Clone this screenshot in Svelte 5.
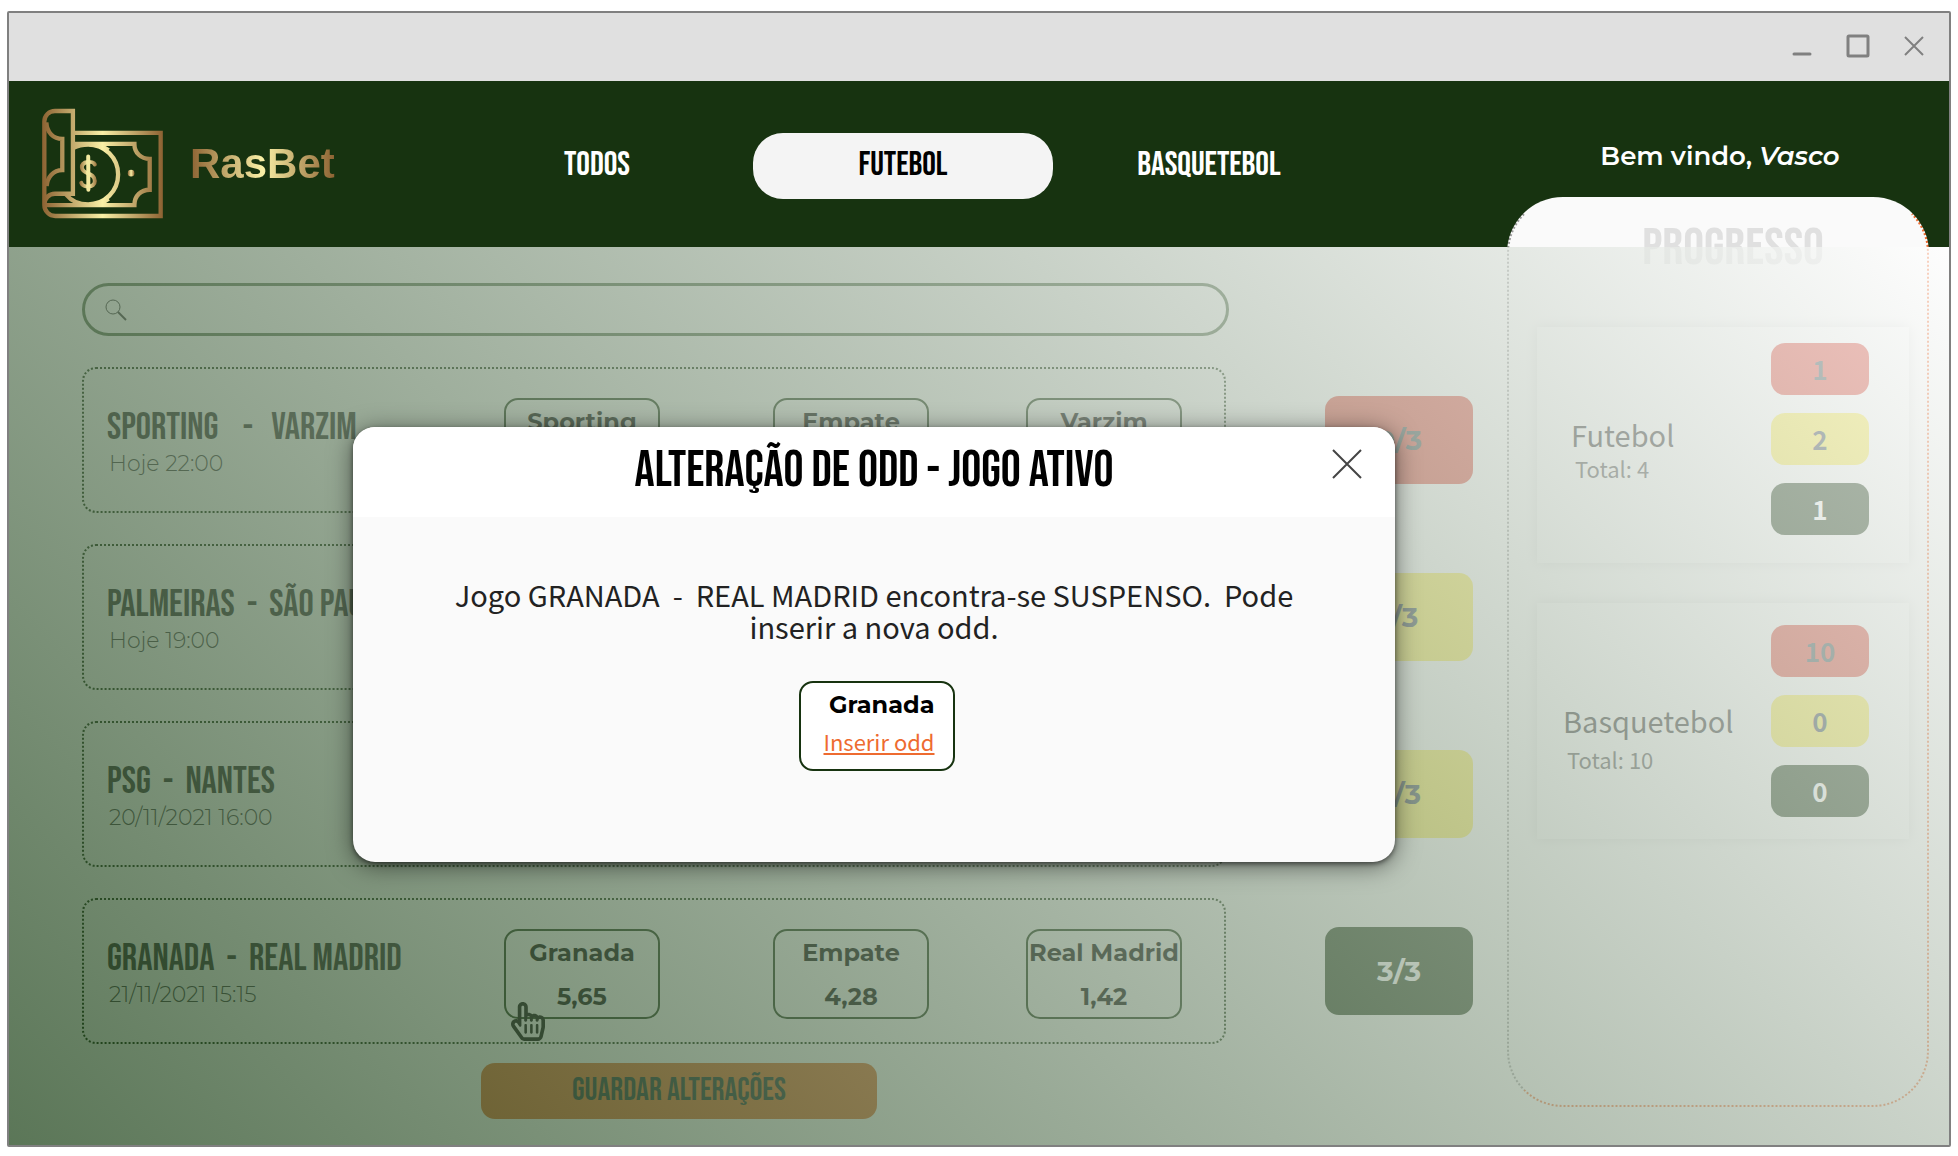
<script>
  const tabs = [
    { name: 'TODOS', active: false },
    { name: 'FUTEBOL', active: true },
    { name: 'BASQUETEBOL', active: false }
  ];

  const matches = [
    {
      title: 'SPORTING    -   VARZIM',
      date: 'Hoje 22:00',
      odds: [['Sporting', ''], ['Empate', ''], ['Varzim', '']],
      status: '0/3',
      tone: 'red'
    },
    {
      title: 'PALMEIRAS  -  SÃO PAULO',
      date: 'Hoje 19:00',
      odds: [],
      status: '1/3',
      tone: 'yellow'
    },
    {
      title: 'PSG  -  NANTES',
      date: '20/11/2021 16:00',
      odds: [],
      status: '2/3',
      tone: 'yellow'
    },
    {
      title: 'GRANADA  -  REAL MADRID',
      date: '21/11/2021 15:15',
      odds: [['Granada', '5,65'], ['Empate', '4,28'], ['Real Madrid', '1,42']],
      status: '3/3',
      tone: 'green',
      pointer: true
    }
  ];

  const progress = [
    { sport: 'Futebol', total: 4, counts: [1, 2, 1] },
    { sport: 'Basquetebol', total: 10, counts: [10, 0, 0] }
  ];
  const tones = ['red', 'yellow', 'green'];
</script>

<div class="window">
  <div class="titlebar">
    <button class="chrome" aria-label="Minimizar">
      <svg width="24" height="24" viewBox="0 0 24 24"><path d="M4 20H20" stroke-width="3" stroke-linecap="round" /></svg>
    </button>
    <button class="chrome" aria-label="Maximizar">
      <svg width="24" height="24" viewBox="0 0 24 24"><rect x="2" y="2" width="20" height="20" rx="1" stroke-width="3" /></svg>
    </button>
    <button class="chrome" aria-label="Fechar janela">
      <svg width="24" height="24" viewBox="0 0 24 24"><path d="M3 3L21 21M21 3L3 21" stroke-width="2" /></svg>
    </button>
  </div>

  <header>
    <a class="brand" href="#inicio">
      <svg class="logo" viewBox="126 322 364 332" aria-hidden="true">
        <defs>
          <linearGradient id="gold" gradientUnits="userSpaceOnUse" x1="126" y1="0" x2="490" y2="0">
            <stop offset="0" stop-color="#8c6232" />
            <stop offset="0.5" stop-color="#f9f0a6" />
            <stop offset="1" stop-color="#8c6232" />
          </linearGradient>
          <linearGradient id="coin" gradientUnits="userSpaceOnUse" x1="236" y1="0" x2="294" y2="0">
            <stop offset="0" stop-color="#8c6232" />
            <stop offset="0.5" stop-color="#f9f0a6" />
            <stop offset="1" stop-color="#8c6232" />
          </linearGradient>
          <linearGradient id="dot">
            <stop offset="0" stop-color="#8c6232" />
            <stop offset="0.5" stop-color="#f9f0a6" />
            <stop offset="1" stop-color="#8c6232" />
          </linearGradient>
        </defs>
        <g fill="none" stroke="url(#gold)" stroke-width="13" stroke-linejoin="miter">
          <path d="M219 396H483V646H166A33 33 0 0 1 133 613" />
          <path d="M133 613V362A32 32 0 0 1 165 330H219V579H165A32 32 0 0 0 133 611" />
          <path d="M136 613H404C404 585 424 567 450 567V474C424 474 404 456 404 429H219" />
          <path d="M139 364C141 395 160 414 187 414V508C160 508 142 528 140 556" />
          <path d="M221 441C234 434 248 431 265 431A90 90 0 0 1 265 611C240 611 215 602 199 582" />
          <path d="M270 431C296 432 314 438 326 448M270 611C296 610 314 604 326 594" />
        </g>
        <g fill="none" stroke="url(#coin)" stroke-width="12" stroke-linecap="round">
          <path d="M285 491C280 479 245 480 246 500C247 522 285 514 285 541C285 563 249 561 244 546" />
          <path d="M265 467L265.5 567" stroke="#f3e9a0" />
        </g>
        <ellipse cx="394" cy="517" rx="10" ry="10" fill="url(#dot)" />
      </svg>
      <span class="wordmark">RasBet</span>
    </a>
    <nav>
      {#each tabs as tab}
        <a href="#{tab.name.toLowerCase()}" class:active={tab.active}>{tab.name}</a>
      {/each}
    </nav>
    <p class="welcome">Bem vindo, <em>Vasco</em></p>
  </header>

  <main>
    <section class="games">
      <label class="search">
        <svg width="22" height="22" viewBox="0 0 22 22" aria-hidden="true">
          <circle cx="8" cy="8" r="7" />
          <path d="M13 13L21 21" stroke-width="2" />
        </svg>
        <input type="search" aria-label="Pesquisar" />
      </label>

      {#each matches as match}
        <div class="row">
          <article>
            <div class="info">
              <h2>{match.title}</h2>
              <p>{match.date}</p>
            </div>
            {#each match.odds as [team, value], i}
              <button class="odd">
                <span>{team}</span>
                <span>{value}</span>
                {#if match.pointer && i === 0}
                  <svg class="pointer" viewBox="0 0 448 512" aria-hidden="true">
                    <path d="M358.182 179.361c-19.493-24.768-52.679-31.945-79.872-19.098-15.127-15.687-36.182-22.487-56.595-19.629V67c0-36.944-29.736-67-66.286-67S89.143 30.056 89.143 67v161.129c-19.909-7.41-43.272-5.094-62.083 8.872-29.355 21.795-35.793 63.333-14.55 93.152l109.699 154.001C134.632 501.59 154.741 512 176 512h178.286c30.802 0 57.574-21.5 64.557-51.797l27.429-118.999A67.873 67.873 0 0 0 448 326v-84c0-46.844-46.625-79.273-89.818-62.639zM80.985 279.697l27.126 38.079c8.995 12.626 29.031 6.287 29.031-9.283V67c0-25.12 36.571-25.16 36.571 0v175c0 8.836 7.163 16 16 16h6.857c8.837 0 16-7.164 16-16v-35c0-25.12 36.571-25.16 36.571 0v35c0 8.836 7.163 16 16 16H272c8.837 0 16-7.164 16-16v-21c0-25.12 36.571-25.16 36.571 0v21c0 8.836 7.163 16 16 16h6.857c8.837 0 16-7.164 16-16 0-25.121 36.571-25.16 36.571 0v84c0 1.488-.169 2.977-.502 4.423l-27.43 119.001c-1.978 8.582-9.29 14.576-17.782 14.576H176c-5.769 0-11.263-2.878-14.697-7.697l-109.712-154c-14.406-20.223 14.994-42.559 29.394-22.606zM176.143 400v-96c0-8.837 6.268-16 14-16h6c7.732 0 14 7.163 14 16v96c0 8.837-6.268 16-14 16h-6c-7.733 0-14-7.163-14-16zm75.428 0v-96c0-8.837 6.268-16 14-16h6c7.732 0 14 7.163 14 16v96c0 8.837-6.268 16-14 16h-6c-7.732 0-14-7.163-14-16zM327 400v-96c0-8.837 6.268-16 14-16h6c7.732 0 14 7.163 14 16v96c0 8.837-6.268 16-14 16h-6c-7.732 0-14-7.163-14-16z" />
                  </svg>
                {/if}
              </button>
            {/each}
          </article>
          <button class="status {match.tone}">{match.status}</button>
        </div>
      {/each}

      <button class="save">GUARDAR ALTERAÇÕES</button>
    </section>

    <aside>
      <h2>PROGRESSO</h2>
      {#each progress as item}
        <section class="card">
          <div class="label">
            <h3>{item.sport}</h3>
            <p>Total: {item.total}</p>
          </div>
          <div class="counts">
            {#each item.counts as count, i}
              <span class={tones[i]}>{count}</span>
            {/each}
          </div>
        </section>
      {/each}
    </aside>

    <div class="veil"></div>

    <div class="dialog" role="dialog" aria-modal="true" aria-labelledby="dialog-title">
      <div class="dialog-head">
        <h1 id="dialog-title">ALTERAÇÃO DE ODD - JOGO ATIVO</h1>
        <button class="close" aria-label="Fechar">
          <svg width="30" height="30" viewBox="0 0 30 30"><path d="M1 1L29 29M29 1L1 29" /></svg>
        </button>
      </div>
      <div class="dialog-body">
        <p>Jogo GRANADA  -  REAL MADRID encontra-se SUSPENSO.  Pode inserir a nova odd.</p>
        <div class="odd entry">
          <span>Granada</span>
          <a href="#inserir-odd">Inserir odd</a>
        </div>
      </div>
    </div>
  </main>
</div>

<style>
  :global(body) {
    background: #fff;
  }

  .window {
    --green: #173310;
    --display: 'Bebas Neue', 'Liberation Sans Narrow', 'Roboto Condensed', Roboto, sans-serif;
    --round: Montserrat, Inter, sans-serif;
    --text: 'Noto Sans CJK JP', 'Noto Sans', sans-serif;
    margin: 11px 7px 8px;
    border: 2px solid #808080;
    border-radius: 2px;
    background: #fafafa;
    font-family: var(--round);
    color: #000;
  }

  h1,
  h2,
  h3,
  p {
    margin: 0;
  }

  button {
    padding: 0;
    border: 0;
    background: none;
    font: inherit;
    color: inherit;
    cursor: pointer;
  }

  svg {
    display: block;
  }

  .titlebar {
    display: flex;
    justify-content: flex-end;
    align-items: center;
    gap: 32px;
    height: 68px;
    padding: 0 23px 2px;
    background: #e0e0e0;
    box-sizing: border-box;
  }

  .chrome svg {
    fill: none;
    stroke: #808080;
  }

  header {
    display: grid;
    grid-template-columns: 438px 912px 1fr;
    align-items: center;
    height: 166px;
    background: var(--green);
  }

  .brand {
    display: flex;
    align-items: center;
    gap: 27px;
    padding: 0 0 2px 33px;
    text-decoration: none;
  }

  .logo {
    width: 121px;
    height: 111px;
  }

  .wordmark {
    padding-top: 2px;
    background: linear-gradient(90deg, #8c6232, #f9f0a6 50%, #8c6232);
    background-clip: text;
    -webkit-background-clip: text;
    color: transparent;
    font: bold 42px/48px 'Liberation Sans', Arial, sans-serif;
  }

  nav {
    display: grid;
    grid-template-columns: repeat(3, 1fr);
    gap: 6px;
    padding-top: 3px;
  }

  nav a {
    padding-bottom: 2px;
    border-radius: 30px;
    color: #fff;
    font: 34px/64px var(--display);
    text-align: center;
    text-decoration: none;
  }

  nav a.active {
    background: #f4f4f4;
    color: #000;
  }

  .welcome {
    padding: 0 18px 16px 150px;
    color: #fff;
    font-size: 26px;
    font-weight: 600;
    line-height: 32px;
    text-align: center;
  }

  main {
    position: relative;
    display: grid;
    grid-template-columns: minmax(0, 1fr) 422px;
    gap: 34px;
    padding: 36px 20px 26px 73px;
  }

  .games {
    display: flex;
    flex-direction: column;
    gap: 31px;
  }

  .search {
    display: flex;
    align-items: center;
    gap: 12px;
    height: 53px;
    margin-right: 244px;
    padding: 0 20px;
    border: 3px solid #4f6a48;
    border-radius: 27px;
    box-sizing: border-box;
  }

  .search svg {
    fill: none;
    stroke: #333;
  }

  .search input {
    flex: 1;
    border: 0;
    background: none;
    font: 22px/32px var(--round);
    outline: none;
  }

  .row {
    display: grid;
    grid-template-columns: minmax(0, 1fr) 148px;
    align-items: center;
    gap: 99px;
  }

  article {
    display: grid;
    grid-template-columns: minmax(0, 1fr) 269px 253px 198px;
    align-items: center;
    height: 146px;
    padding: 5px 0 0 23px;
    border: 2px dotted var(--green);
    border-radius: 14px;
    box-sizing: border-box;
  }

  .info {
    padding-top: 3px;
  }

  .info h2 {
    color: #333;
    font: 38px/40px var(--display);
    white-space: pre;
  }

  .info p {
    padding-left: 2px;
    color: #444;
    font-size: 22px;
    font-weight: 300;
    line-height: 32px;
  }

  .odd {
    position: relative;
    display: flex;
    flex-direction: column;
    gap: 12px;
    align-items: center;
    width: 156px;
    height: 90px;
    padding-top: 6px;
    border: 2px solid var(--green);
    border-radius: 14px;
    box-sizing: border-box;
    font: bold 24px/32px var(--round);
    white-space: nowrap;
  }

  .pointer {
    position: absolute;
    top: 71px;
    left: 5px;
    width: 34px;
    height: 39px;
  }

  .status {
    height: 88px;
    border-radius: 14px;
    font-size: 28px;
    font-weight: bold;
  }

  .red {
    background: #d94435;
    color: #33484a;
  }

  .yellow {
    background: #f6e84a;
    color: #33424a;
  }

  .green {
    background: var(--green);
    color: #fff;
  }

  .save {
    align-self: flex-start;
    width: 396px;
    height: 56px;
    margin: -12px 0 0 399px;
    border-radius: 14px;
    background: #dc6c28;
    color: #172c28;
    font: 32px/52px var(--display);
  }

  aside {
    margin: -86px 0 12px;
    padding: 26px 18px 0 28px;
    border: 2px dotted #ee6b30;
    border-top-color: #fafafa;
    border-left-color: #999;
    border-radius: 56px;
    background: #fafafa;
    font-family: var(--text);
  }

  aside h2 {
    padding-left: 20px;
    color: #e0e0e0;
    font: 52px/48px var(--display);
    text-align: center;
  }

  .card {
    display: flex;
    justify-content: space-between;
    height: 236px;
    margin-top: 40px;
    padding: 16px 40px 0 34px;
    box-shadow: 0 0 12px rgba(0, 0, 0, 0.12);
    box-sizing: border-box;
  }

  aside h2 + .card {
    margin-top: 54px;
  }

  .card + .card {
    padding: 22px 40px 0 26px;
  }

  .label {
    padding-top: 73px;
  }

  .card + .card .label {
    padding-top: 77px;
  }

  .label h3 {
    color: #222;
    font-size: 29px;
    font-weight: 400;
    line-height: 36px;
  }

  .label p {
    padding-left: 4px;
    color: #444;
    font-size: 22px;
    line-height: 32px;
  }

  .card + .card .label p {
    padding-top: 5px;
  }

  .counts {
    display: flex;
    flex-direction: column;
    gap: 18px;
  }

  .counts span {
    width: 98px;
    border-radius: 14px;
    font-size: 26px;
    font-weight: bold;
    line-height: 52px;
    text-align: center;
  }

  .veil {
    position: absolute;
    inset: 0;
    background: linear-gradient(45deg, #173e12, #fff);
    opacity: 0.7;
  }

  .dialog {
    position: absolute;
    top: 180px;
    left: 344px;
    width: 1042px;
    border-radius: 22px;
    background: #fafafa;
    box-shadow: 0 2px 5px rgba(0, 0, 0, 0.5), 0 4px 24px rgba(0, 0, 0, 0.5);
    overflow: hidden;
  }

  .dialog-head {
    display: flex;
    align-items: center;
    height: 90px;
    padding: 0 33px 16px;
    background: #fff;
    box-sizing: border-box;
  }

  .dialog-head h1 {
    flex: 1;
    padding: 14px 0 0 30px;
    font: 50px/52px var(--display);
    text-align: center;
  }

  .close svg {
    fill: none;
    stroke: #444;
    stroke-width: 2;
  }

  .dialog-body {
    display: flex;
    flex-direction: column;
    align-items: center;
    gap: 39px;
    padding: 61px 100px 91px;
  }

  .dialog-body p {
    color: #222;
    font: 29px/32px var(--text);
    text-align: center;
    white-space: pre-wrap;
  }

  .entry {
    gap: 4px;
    align-items: flex-end;
    margin-left: 5px;
    padding-right: 18px;
    background: #fff;
  }

  .entry a {
    color: #ee6b30;
    font: 22px/32px var(--text);
  }
</style>
